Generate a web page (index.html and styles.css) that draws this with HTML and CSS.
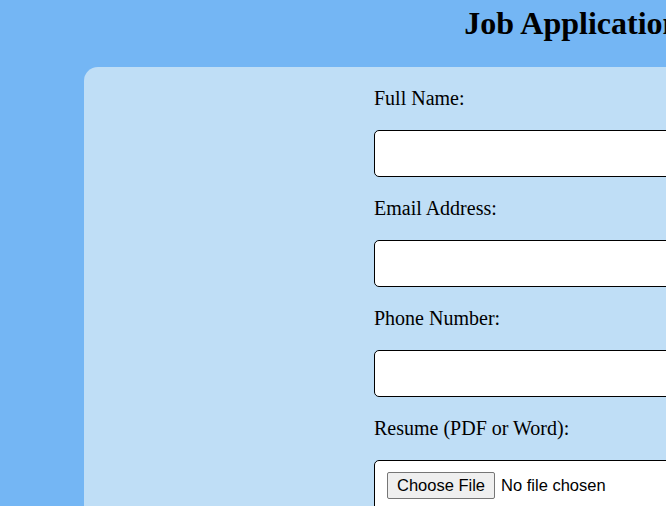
FILE: index.html
```html
<!DOCTYPE html>
<html lang="en">
<head>
<meta charset="utf-8">
<title>Job Application Form</title>
<link rel="stylesheet" href="styles.css">
</head>
<body>
<div class="page">
  <h1 class="title">Job Application Form</h1>
  <div class="card">
    <div class="aside"></div>
    <form class="form">
      <label class="label" for="name">Full Name:</label>
      <input class="field" type="text" id="name" name="name">
      <label class="label" for="email">Email Address:</label>
      <input class="field" type="email" id="email" name="email">
      <label class="label" for="phone">Phone Number:</label>
      <input class="field" type="tel" id="phone" name="phone">
      <label class="label" for="resume">Resume (PDF or Word):</label>
      <input class="file" type="file" id="resume" name="resume">
    </form>
  </div>
</div>
</body>
</html>
```

FILE: styles.css
```css
html {
  overflow: hidden;
}
body {
  margin: 0;
  background: #74b6f4;
  font-family: "Liberation Serif", "Times New Roman", serif;
  color: #000;
}
.page {
  width: 1213px;
  padding: 0 8px;
}
.title {
  margin: 5px 0 25px;
  font-size: 32px;
  font-weight: bold;
  text-align: center;
}
.card {
  margin: 0 76px;
  padding: 20px;
  background: #bfdef6;
  border-radius: 14px;
  display: grid;
  grid-template-columns: 250px 1fr;
  column-gap: 20px;
}
.form {
  display: flex;
  flex-direction: column;
  align-items: stretch;
}
.label {
  display: block;
  font-size: 20px;
  margin-bottom: 20px;
}
.field {
  box-sizing: border-box;
  height: 47px;
  margin: 0 0 20px;
  padding: 0 12px;
  border: 1px solid #000;
  border-radius: 5px;
  background: #fff;
  font-family: "Liberation Sans", Arial, sans-serif;
  font-size: 16.5px;
}
.file {
  box-sizing: border-box;
  margin: 0;
  padding: 11px 12px;
  border: 1px solid #000;
  border-radius: 5px;
  background: #fff;
  font-family: "Liberation Sans", Arial, sans-serif;
  font-size: 16.5px;
  color: #000;
}
.file::file-selector-button {
  font: inherit;
  padding: 3px 9px;
  margin: 0 6px 0 0;
  border: 1px solid #767676;
  border-radius: 2px;
  background: #efefef;
  color: #000;
}
```
